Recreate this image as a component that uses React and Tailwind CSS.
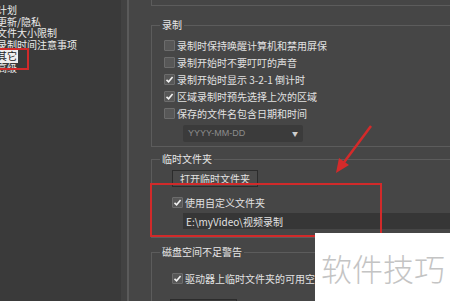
import React from 'react';

const font = { fontFamily: '"Noto Sans CJK SC", "Liberation Sans", sans-serif' };

function Check({ checked }) {
  return (
    <span className="flex h-[11px] w-[11px] shrink-0 items-center justify-center rounded-[1px] border border-[#6c6c6c] bg-[#575757]">
      {checked && (
        <svg width="9" height="9" viewBox="0 0 9 9">
          <path d="M1.5 4.8 L3.6 6.8 L7.6 2" fill="none" stroke="#f2f2f2" strokeWidth="1.6" />
        </svg>
      )}
    </span>
  );
}

function Row({ checked, label, className = '' }) {
  return (
    <div className={'flex h-[17px] items-center gap-[2px] ' + className}>
      <Check checked={checked} />
      <span className="whitespace-nowrap text-[10px] leading-[17px] text-[#e2e2e2]">{label}</span>
    </div>
  );
}

function Group({ title, className = '', children }) {
  return (
    <fieldset className={'w-[320px] border border-[#5c5c5c] ' + className}>
      <legend className="ml-[8px] px-[2px] text-[10px] leading-[14px] text-[#e6e6e6]">{title}</legend>
      {children}
    </fieldset>
  );
}

export default function App() {
  const menu = ['计划', '更新/隐私', '文件大小限制', '录制时间注意事项', '其它', '高级'];
  return (
    <div className="relative flex h-[301px] w-[450px] overflow-hidden bg-[#464646]" style={font}>
      <div className="w-[121px] shrink-0 overflow-hidden bg-[#3a3a3a]">
        <div className="-ml-[3px] pt-[4px]">
          {menu.map((m) => (
            <div key={m} className="h-[11.5px] whitespace-nowrap text-[10px] leading-[11.5px] text-[#ececec]">
              {m === '其它' ? <span className="bg-[#eeeeee] pr-[1px] text-[#222]">{m}</span> : m}
            </div>
          ))}
        </div>
      </div>
      <div className="w-[6px] shrink-0 bg-[#424242]" />
      <div className="w-[2px] shrink-0 bg-[#5a5a5a]" />

      <div className="flex-1 overflow-hidden pl-[22px]">
        <div className="-mt-[20px] h-[26px] w-[320px] border border-[#5c5c5c]" />

        <Group title="录制" className="mt-[12px]">
          <div className="pb-[4px] pl-[12px] pt-[5px]">
            <Row label="录制时保持唤醒计算机和禁用屏保" />
            <Row label="录制开始时不要叮叮的声音" />
            <Row checked label="录制开始时显示 3-2-1 倒计时" />
            <Row checked label="区域录制时预先选择上次的区域" />
            <Row label="保存的文件名包含日期和时间" />
            <div className="ml-[19px] mt-[3px] flex h-[17px] w-[120px] items-center justify-between rounded-[2px] bg-[#3b3b3b] px-[5px]">
              <span className="text-[9px] text-[#8c8c8c]" style={{ fontFamily: '"Liberation Sans", sans-serif' }}>YYYY-MM-DD</span>
              <span className="text-[6px] text-[#cfcfcf]">▼</span>
            </div>
          </div>
        </Group>

        <Group title="临时文件夹" className="mt-[5px]">
          <div className="pb-[8px] pl-[12px] pt-[4px]">
            <div className="ml-[8px] flex h-[17px] w-[86px] items-center justify-center border border-[#2c2c2c] bg-[#4b4b4b] text-[10px] text-[#e2e2e2]">
              打开临时文件夹
            </div>
            <Row checked label="使用自定义文件夹" className="ml-[8px] mt-[7px]" />
            <div className="ml-[19px] mt-[2px] flex h-[16px] items-center bg-[#363636] pl-[3px] text-[10px] text-[#e2e2e2]">
              E:\myVideo\视频录制
            </div>
          </div>
        </Group>

        <Group title="磁盘空间不足警告" className="mt-[7px]">
          <div className="pl-[12px] pt-[11px]">
            <Row checked label="驱动器上临时文件夹的可用空间低于" className="ml-[8px]" />
            <div className="ml-[6px] mt-[12px] h-[17px] w-[67px] border border-[#2c2c2c] bg-[#3a3a3a]" />
          </div>
        </Group>
      </div>

      {/* annotations */}
      <div className="absolute left-[-2px] top-[48px] h-[22px] w-[31px] border-2 border-[#d12a2a]" />
      <div className="absolute left-[150px] top-[183px] h-[54px] w-[232px] border-2 border-[#d12a2a]" />
      <svg className="absolute left-[330px] top-[120px]" width="50" height="60" viewBox="0 0 50 60">
        <line x1="41" y1="6" x2="12" y2="45" stroke="#d42a2a" strokeWidth="2.5" />
        <polygon points="6,53 9,38 19,45" fill="#d42a2a" />
      </svg>

      <div className="absolute left-[315px] top-[233px] flex h-[68px] w-[135px] items-center bg-white pl-[6px]">
        <span className="whitespace-nowrap text-[31px] font-light leading-none text-[#c4c4c4]">软件技巧</span>
      </div>
    </div>
  );
}
